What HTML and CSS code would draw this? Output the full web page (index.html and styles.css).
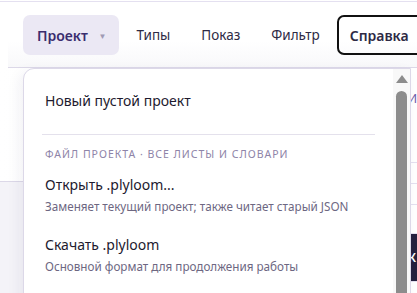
FILE: index.html
```html
<!DOCTYPE html>
<html lang="ru">
<head>
    <meta charset="UTF-8">
    <meta name="viewport" content="width=device-width, initial-scale=1.0">
    <title>Plyloom</title>
    <link rel="stylesheet" href="styles.css">
</head>
<body>
    <div class="app">
        <div class="toolbar">
            <button class="tab tab-active">Проект <span class="caret">▼</span></button>
            <button class="tab">Типы</button>
            <button class="tab">Показ</button>
            <button class="tab">Фильтр</button>
            <button class="tab tab-outline">Справка</button>
        </div>
        <div class="workspace">
            <div class="gutter">
                <div class="gutter-top"></div>
                <div class="gutter-bottom"></div>
            </div>
            <div class="sheet">
                <div class="sheet-row sheet-head">И</div>
                <div class="sheet-row"></div>
                <div class="sheet-row"></div>
                <div class="sheet-row sheet-spacer"></div>
                <div class="sheet-row sheet-dark">К</div>
            </div>
        </div>

        <div class="menu">
            <div class="menu-body">
                <div class="menu-item menu-item-single">Новый пустой проект</div>
                <hr class="menu-sep">
                <div class="menu-label">Файл проекта · все листы и словари</div>
                <div class="menu-item">
                    <div class="item-title">Открыть .plyloom...</div>
                    <div class="item-note">Заменяет текущий проект; также читает старый JSON</div>
                </div>
                <div class="menu-item">
                    <div class="item-title">Скачать .plyloom</div>
                    <div class="item-note">Основной формат для продолжения работы</div>
                </div>
            </div>
            <div class="scrollbar">
                <div class="scroll-arrow"></div>
                <div class="scroll-thumb"></div>
            </div>
        </div>
    </div>
</body>
</html>
```

FILE: styles.css
```css
body {
    margin: 0;
    font-family: "Noto Sans", "Open Sans", sans-serif;
    background-color: #ffffff;
    overflow: hidden;
}

.app {
    position: relative;
    width: 417px;
    height: 293px;
    overflow: hidden;
    border-top: 1px solid #e4e0f0;
    margin-top: 1px;
    box-sizing: border-box;
}

.toolbar {
    display: flex;
    align-items: center;
    gap: 3px;
    height: 66px;
    margin-left: 8px;
    padding-left: 15px;
    padding-top: 1px;
    box-sizing: border-box;
    border-bottom: 1px solid #dcd8e8;
    background: linear-gradient(to bottom, #ffffff 60%, #f8f8fa 100%);
    white-space: nowrap;
}

.tab {
    height: 40px;
    padding: 0 14px;
    border: none;
    border-radius: 7px;
    background: transparent;
    font-family: inherit;
    font-size: 13.5px;
    color: #2e2a45;
    flex-shrink: 0;
}

.tab-active {
    background-color: #ebe8f4;
    color: #3a2d6e;
    font-size: 14px;
    font-weight: 600;
    padding-right: 13px;
}

.caret {
    font-size: 8px;
    color: #a09ab4;
    margin-left: 7px;
    vertical-align: 2px;
}

.tab-outline {
    border: 2px solid #111111;
    font-size: 14px;
    font-weight: 600;
    padding: 0 14px 0 11px;
    width: 100px;
    text-align: left;
}

.workspace {
    display: flex;
    height: 226px;
}

.gutter {
    width: 410px;
    display: flex;
    flex-direction: column;
    background: linear-gradient(to right, #ffffff, #f6f5f9);
}

.gutter-top {
    height: 113px;
    border-bottom: 1px solid #dcd8e8;
}

.gutter-bottom {
    flex: 1;
    background-color: #f4f3f8;
}

.sheet {
    flex: 1;
    border-left: 1px solid #dcd8e8;
}

.sheet-row {
    height: 20px;
    border-bottom: 1px solid #e4e0f0;
    font-size: 12px;
    color: #6a5aa8;
    overflow: hidden;
}

.sheet-head {
    height: 95px;
    padding-top: 22px;
    box-sizing: border-box;
}

.sheet-spacer {
    height: 28px;
}

.sheet-dark {
    height: 47px;
    background-color: #25203f;
    color: #ffffff;
    line-height: 47px;
    font-weight: 600;
}

.menu {
    position: absolute;
    left: 23px;
    top: 66px;
    width: 386px;
    height: 240px;
    display: flex;
    background-color: #ffffff;
    border: 1px solid #dcd8e8;
    border-top-left-radius: 11px;
    box-shadow: -4px 4px 14px rgba(40, 30, 80, 0.06);
}

.menu-body {
    flex: 1;
    padding: 0 18px 0 18px;
}

.menu-item {
    padding: 0 3px;
}

.menu-item-single {
    font-size: 14px;
    color: #1d1a2e;
    padding-top: 22px;
    height: 43px;
}

.menu-sep {
    border: none;
    border-top: 1px solid #e4e1ec;
    margin: 0;
}

.menu-label {
    padding: 12px 3px 14px;
    font-size: 10.5px;
    letter-spacing: 1px;
    text-transform: uppercase;
    color: #8e84a8;
}

.item-title {
    font-size: 14px;
    color: #1d1a2e;
}

.item-note {
    font-size: 11.7px;
    color: #6d6782;
    margin-top: 4px;
    margin-bottom: 21px;
}

.scrollbar {
    width: 17px;
    background-color: #f8f8f8;
    display: flex;
    flex-direction: column;
    align-items: center;
}

.scroll-arrow {
    width: 0;
    height: 0;
    margin-top: 6px;
    border-left: 6px solid transparent;
    border-right: 6px solid transparent;
    border-bottom: 8px solid #8c8c8c;
}

.scroll-thumb {
    width: 11px;
    flex: 1;
    margin-top: 8px;
    border-radius: 6px 6px 0 0;
    background-color: #8c8c8c;
}
```
